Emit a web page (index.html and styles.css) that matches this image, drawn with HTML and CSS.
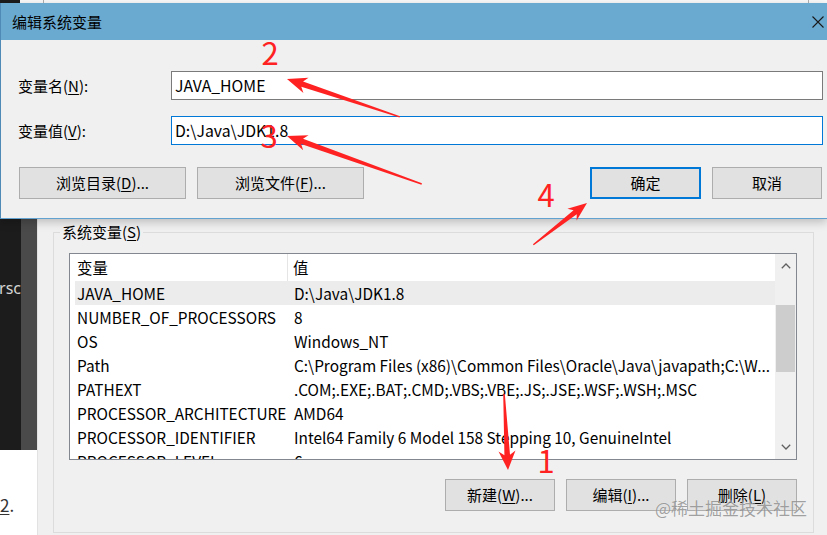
FILE: index.html
```html
<!DOCTYPE html>
<html lang="zh-CN">
<head>
    <meta charset="UTF-8">
    <title>编辑系统变量</title>
    <link rel="stylesheet" href="styles.css">
</head>
<body>

<div class="screen">
    <div class="topStrip"></div>

    <div class="editDialog">
        <div class="titleBar">
            <span class="titleText">编辑系统变量</span>
            <svg class="closeIcon" width="12" height="12" viewBox="0 0 12 12">
                <path d="M0.5 0.5 L11.5 11.5 M11.5 0.5 L0.5 11.5" stroke="#1a1a1a" stroke-width="1.1" fill="none"/>
            </svg>
        </div>
        <div class="dialogBody">
            <div class="fields">
                <div class="fieldRow">
                    <label>变量名(<u>N</u>):</label>
                    <div class="textBox">JAVA_HOME</div>
                </div>
                <div class="fieldRow">
                    <label>变量值(<u>V</u>):</label>
                    <div class="textBox focused">D:\Java\JDK1.8</div>
                </div>
            </div>
            <div class="buttonRow">
                <div class="winButton wide">浏览目录(<u>D</u>)...</div>
                <div class="winButton wide">浏览文件(<u>F</u>)...</div>
                <div class="spacer"></div>
                <div class="winButton default">确定</div>
                <div class="winButton">取消</div>
            </div>
        </div>
    </div>

    <div class="behind">
        <div class="sidePanel">
            <div class="darkArea">
                <div class="darkText"><span>ersc</span></div>
            </div>
            <div class="whiteArea"><u>2</u>.</div>
        </div>

        <div class="envWindow">
            <fieldset class="groupBox">
                <legend>系统变量(<u>S</u>)</legend>
                <div class="listBox">
                    <div class="listMain">
                        <div class="listHeader">
                            <div class="headCell">变量</div>
                            <div class="headCell second">值</div>
                        </div>
                        <div class="listRow selected">
                            <div class="cell">JAVA_HOME</div>
                            <div class="cell second">D:\Java\JDK1.8</div>
                        </div>
                        <div class="listRow">
                            <div class="cell">NUMBER_OF_PROCESSORS</div>
                            <div class="cell second">8</div>
                        </div>
                        <div class="listRow">
                            <div class="cell">OS</div>
                            <div class="cell second">Windows_NT</div>
                        </div>
                        <div class="listRow">
                            <div class="cell">Path</div>
                            <div class="cell second">C:\Program Files (x86)\Common Files\Oracle\Java\javapath;C:\W...</div>
                        </div>
                        <div class="listRow">
                            <div class="cell">PATHEXT</div>
                            <div class="cell second">.COM;.EXE;.BAT;.CMD;.VBS;.VBE;.JS;.JSE;.WSF;.WSH;.MSC</div>
                        </div>
                        <div class="listRow">
                            <div class="cell">PROCESSOR_ARCHITECTURE</div>
                            <div class="cell second">AMD64</div>
                        </div>
                        <div class="listRow">
                            <div class="cell">PROCESSOR_IDENTIFIER</div>
                            <div class="cell second">Intel64 Family 6 Model 158 Stepping 10, GenuineIntel</div>
                        </div>
                        <div class="listRow">
                            <div class="cell">PROCESSOR_LEVEL</div>
                            <div class="cell second">6</div>
                        </div>
                    </div>
                    <div class="scrollBar">
                        <div class="scrollButton">
                            <svg width="10" height="6" viewBox="0 0 10 6"><path d="M0.8 5.2 L5 1 L9.2 5.2" stroke="#606060" stroke-width="1.3" fill="none"/></svg>
                        </div>
                        <div class="scrollTrack">
                            <div class="scrollThumb"></div>
                        </div>
                        <div class="scrollButton">
                            <svg width="10" height="6" viewBox="0 0 10 6"><path d="M0.8 0.8 L5 5 L9.2 0.8" stroke="#606060" stroke-width="1.3" fill="none"/></svg>
                        </div>
                    </div>
                </div>
                <div class="listButtons">
                    <div class="winButton">新建(<u>W</u>)...</div>
                    <div class="winButton">编辑(<u>I</u>)...</div>
                    <div class="winButton">删除(<u>L</u>)</div>
                </div>
            </fieldset>
        </div>
    </div>

    <!-- 红色标注 -->
    <svg class="annotations" width="827" height="535" viewBox="0 0 827 535">
        <g fill="#ff2222">
            <polygon transform="translate(287 79) rotate(198.6)" points="0,0 -20,-8 -16,-2.8 -119,-0.7 -119,0.7 -16,2.8 -20,8"/>
            <polygon transform="translate(287 136) rotate(199.6)" points="0,0 -20,-8 -16,-2.8 -143,-0.7 -143,0.7 -16,2.8 -20,8"/>
            <polygon transform="translate(587 203) rotate(-37.9)" points="0,0 -19,-7.5 -15,-2.6 -68,-0.7 -68,0.7 -15,2.6 -19,7.5"/>
            <polygon transform="translate(508 470) rotate(87)" points="0,0 -19,-8.5 -15,-2.8 -76,-0.8 -76,0.8 -15,2.8 -19,8.5"/>
        </g>
        <g class="stepNumber">
            <text x="270" y="65">2</text>
            <text x="269" y="148">3</text>
            <text x="546" y="207">4</text>
            <text x="546" y="473">1</text>
        </g>
    </svg>

    <div class="watermark">@稀土掘金技术社区</div>
</div>

</body>
</html>
```

FILE: styles.css
```css
* {
    box-sizing: border-box;
}

body {
    margin: 0;
    width: 827px;
    height: 535px;
    overflow: hidden;
    background: #f0f0f0;
    font-family: "Noto Sans CJK SC", "Noto Sans", sans-serif;
    font-size: 15px;
    color: #000;
}

u {
    text-decoration: underline;
    text-underline-offset: 2px;
}

.screen {
    position: relative;
    width: 827px;
    height: 535px;
    overflow: hidden;
}

/*背后窗口露出的一条*/
.topStrip {
    height: 3px;
    background: linear-gradient(to right, #1c1c1c 0 20px, #fafafa 20px 43px, #b0b0b0 43px 44px, #fafafa 44px 808px, #b0b0b0 808px 809px, #fafafa 809px);
}

.editDialog {
    position: relative;
    z-index: 1;
    border-left: 1px solid #4f8ab6;
    border-bottom: 1px solid #62a2d0;
    box-shadow: 0 3px 9px rgba(0, 0, 0, 0.22);
}

.titleBar {
    height: 37px;
    background: #6aaad0;
    display: flex;
    align-items: center;
    justify-content: space-between;
    padding: 0 3px 0 11px;
}

.titleText {
    font-size: 15px;
    line-height: 20px;
}

.dialogBody {
    background: #f0f0f0;
    padding: 31px 4px 19px 17px;
}

.fields {
    display: flex;
    flex-direction: column;
    gap: 16px;
}

.fieldRow {
    display: flex;
    align-items: center;
    height: 29px;
}

.fieldRow label {
    width: 153px;
    line-height: 20px;
}

.textBox {
    flex: 1;
    height: 29px;
    border: 1px solid #7a7a7a;
    background: #fff;
    padding-left: 3px;
    display: flex;
    align-items: center;
    font-size: 15.8px;
}

.textBox.focused {
    border-color: #0078d7;
}

.buttonRow {
    display: flex;
    gap: 11px;
    margin-top: 22px;
    padding: 0 1px 0 1px;
}

.spacer {
    flex: 1;
}

.winButton {
    width: 110px;
    height: 32px;
    background: #e1e1e1;
    border: 1px solid #adadad;
    display: flex;
    align-items: center;
    justify-content: center;
    line-height: 20px;
}

.winButton.wide {
    width: 167px;
}

.winButton.default {
    width: 111px;
    border: 2px solid #0078d7;
}

/*下面的环境变量窗口*/
.behind {
    display: flex;
    height: 316px;
}

.sidePanel {
    width: 37px;
    display: flex;
    flex-direction: column;
}

.darkArea {
    height: 231px;
    background: linear-gradient(to right, #1c1c1c 0 21px, #4a4a4a 21px);
    padding-top: 59px;
}

.darkText {
    width: 21px;
    display: flex;
    justify-content: flex-end;
    overflow: hidden;
    white-space: nowrap;
    color: #d4d4d4;
    font-family: "Noto Sans", sans-serif;
    font-size: 16px;
    line-height: 20px;
}

.whiteArea {
    flex: 1;
    background: #fff;
    padding-top: 44px;
    color: #333;
    font-size: 17px;
    line-height: 22px;
    white-space: nowrap;
}

.envWindow {
    flex: 1;
    border-left: 1px solid #e2e2e2;
    padding: 3px 0 0 15px;
}

.groupBox {
    width: 761px;
    height: 311px;
    margin: 0;
    border: 1px solid #dcdcdc;
    padding: 11px 15px 0 15px;
}

.groupBox legend {
    padding: 0 2px;
    margin-left: -9px;
    line-height: 20px;
}

.listBox {
    width: 728px;
    height: 207px;
    border: 1px solid #828790;
    background: #fff;
    display: flex;
}

.listMain {
    flex: 1;
    padding-left: 5px;
    overflow: hidden;
    font-size: 15.4px;
}

.listHeader, .listRow {
    display: grid;
    grid-template-columns: 213px 1fr;
    white-space: nowrap;
}

.listHeader {
    height: 27px;
    align-items: stretch;
}

.headCell {
    padding-left: 2px;
    line-height: 27px;
}

.headCell.second {
    border-left: 1px solid #e5e5e5;
    padding-left: 5px;
    margin-left: -1px;
}

.listRow {
    height: 24px;
    line-height: 24px;
}

.listRow.selected {
    background: #ececec;
}

.cell {
    padding-left: 2px;
    overflow: hidden;
}

.cell.second {
    padding-left: 6px;
}

.scrollBar {
    width: 21px;
    background: #f0f0f0;
    display: flex;
    flex-direction: column;
}

.scrollButton {
    height: 24px;
    display: flex;
    align-items: center;
    justify-content: center;
}

.scrollTrack {
    flex: 1;
    padding: 27px 1px 0 1px;
}

.scrollThumb {
    height: 67px;
    background: #cdcdcd;
}

.listButtons {
    display: flex;
    justify-content: flex-end;
    gap: 11px;
    margin-top: 19px;
    padding-right: 1px;
}

/*标注层*/
.annotations {
    position: absolute;
    left: 0;
    top: 0;
    z-index: 5;
    pointer-events: none;
}

.stepNumber text {
    fill: #ff2222;
    font-family: "Noto Sans CJK SC", "Noto Sans", sans-serif;
    font-size: 31px;
    text-anchor: middle;
}

.watermark {
    position: absolute;
    left: 655px;
    top: 496px;
    z-index: 6;
    font-size: 17px;
    line-height: 24px;
    color: rgba(100, 100, 100, 0.6);
    text-shadow: 0 0 1px rgba(255, 255, 255, 0.7);
    white-space: nowrap;
}
```
